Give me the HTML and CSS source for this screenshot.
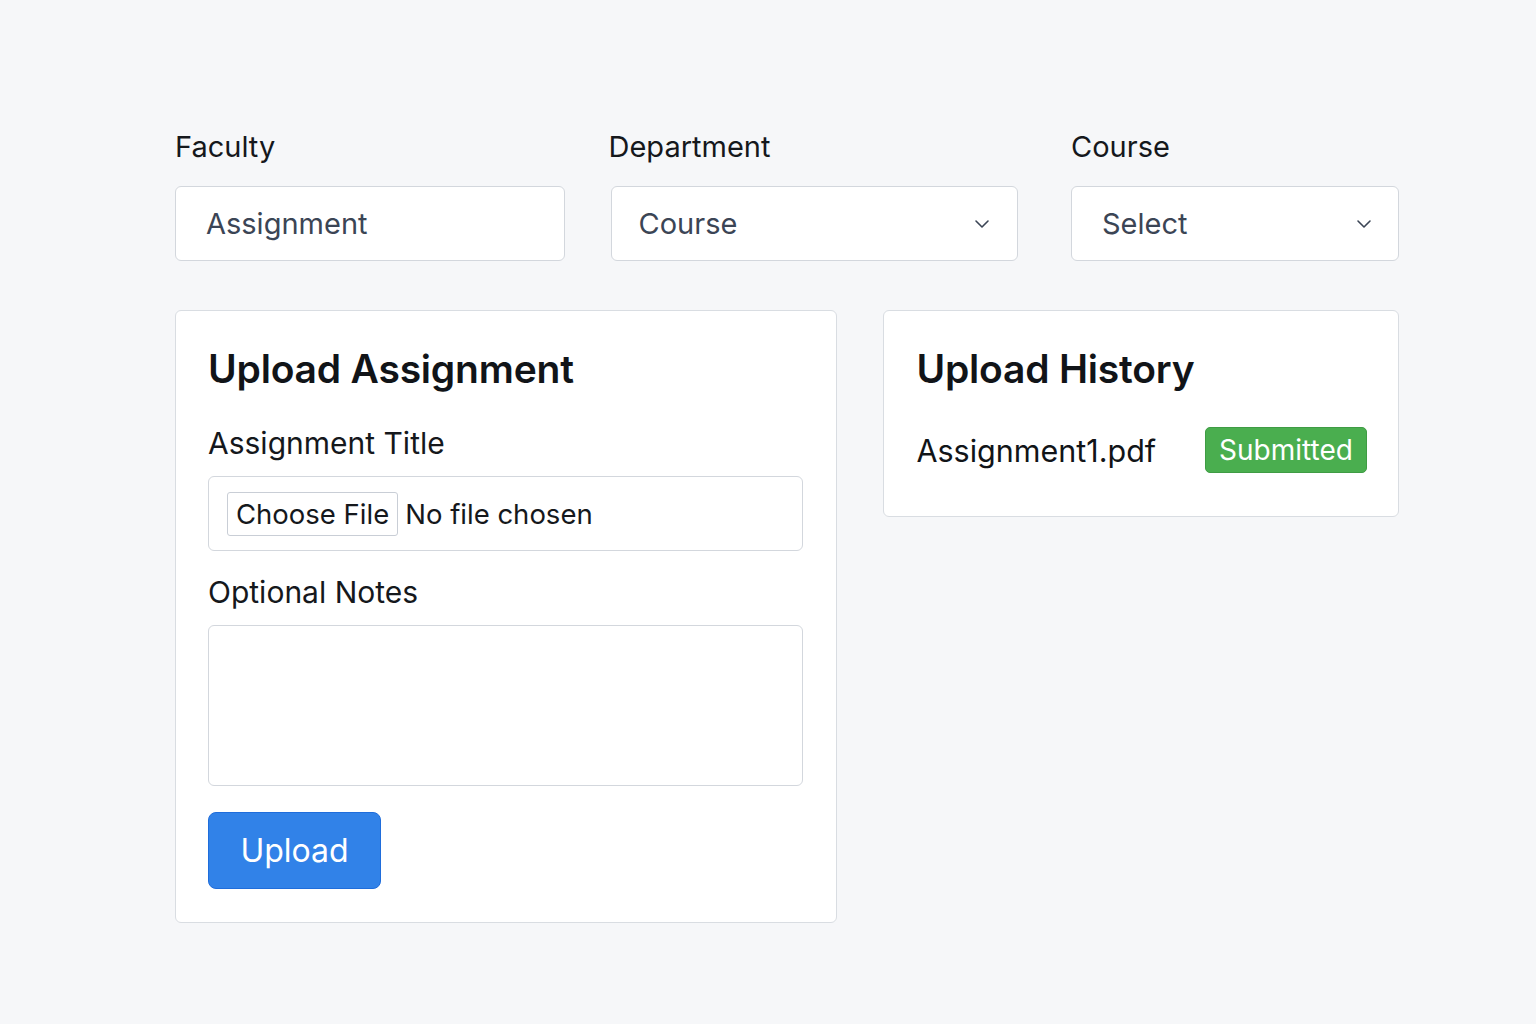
FILE: index.html
```html
<!DOCTYPE html>
<html lang="en">
<head>
<meta charset="utf-8">
<title>Upload Assignment</title>
<link rel="stylesheet" href="styles.css">
</head>
<body>
<main class="page">
  <section class="filters">
    <div class="field field-faculty">
      <label class="field-label">Faculty</label>
      <div class="control">Assignment</div>
    </div>
    <div class="field field-dept">
      <label class="field-label">Department</label>
      <div class="control select">
        <span>Course</span>
        <svg class="chev" width="16" height="10" viewBox="0 0 16 10"><path d="M2 2l6 6 6-6" fill="none" stroke="#3b4555" stroke-width="1.6" stroke-linecap="round" stroke-linejoin="round"/></svg>
      </div>
    </div>
    <div class="field field-course">
      <label class="field-label">Course</label>
      <div class="control select">
        <span>Select</span>
        <svg class="chev" width="16" height="10" viewBox="0 0 16 10"><path d="M2 2l6 6 6-6" fill="none" stroke="#3b4555" stroke-width="1.6" stroke-linecap="round" stroke-linejoin="round"/></svg>
      </div>
    </div>
  </section>

  <section class="cards">
    <div class="card card-upload">
      <h2 class="card-title">Upload Assignment</h2>
      <div class="form-label">Assignment Title</div>
      <div class="file-box">
        <span class="file-btn">Choose File</span>
        <span class="file-text">No file chosen</span>
      </div>
      <div class="form-label notes-label">Optional Notes</div>
      <div class="textarea"></div>
      <button class="btn-upload">Upload</button>
    </div>
    <div class="card card-history">
      <h2 class="card-title">Upload History</h2>
      <div class="history-row">
        <span class="file-name">Assignment1.pdf</span>
        <span class="badge">Submitted</span>
      </div>
    </div>
  </section>
</main>
</body>
</html>
```
FILE: styles.css
```css
* { box-sizing: border-box; }
html, body { margin: 0; padding: 0; }
body {
  background: #f6f7f9;
  font-family: Inter, "Noto Sans", "Liberation Sans", sans-serif;
  color: #111418;
  width: 1536px;
  height: 1024px;
}
.page {
  padding: 130px 0 0 175px;
  width: 1399px;
}
.filters {
  display: flex;
  justify-content: space-between;
}
.field { display: flex; flex-direction: column; }
.field-faculty { width: 390px; }
.field-dept { width: 407px; margin-left: -8px; }
.field-course { width: 328px; }
.field-label {
  font-size: 29px;
  line-height: 34px;
  margin-bottom: 22px;
  color: #15181c;
}
.field-dept .field-label { margin-left: -2px; }
.control {
  height: 75px;
  background: #fff;
  border: 1px solid #d3d7dd;
  border-radius: 6px;
  padding: 0 30px;
  display: flex;
  align-items: center;
  font-size: 29px;
  color: #3b4555;
}
.select { justify-content: space-between; padding-right: 26px; }
.field-dept .control { padding-left: 27px; padding-right: 27px; }
.chev { display: block; }

.cards {
  display: flex;
  gap: 46px;
  margin-top: 49px;
  align-items: flex-start;
}
.card {
  background: #fff;
  border: 1px solid #d9dde2;
  border-radius: 6px;
}
.card-upload { width: 663px; padding: 34px 33px 33px 32px; }
.card-history { width: 516px; padding: 34px 31px 43px 32px; }
.card-title {
  margin: 0;
  font-size: 39px;
  line-height: 48px;
  font-weight: 600;
  color: #111418;
  letter-spacing: -0.2px;
}
.form-label {
  font-size: 30px;
  line-height: 36px;
  margin-top: 32px;
  margin-bottom: 15px;
  color: #15181c;
}
.notes-label { margin-top: 23px; }
.file-box {
  height: 75px;
  border: 1px solid #d3d7dd;
  border-radius: 6px;
  display: flex;
  align-items: center;
  padding-left: 18px;
  font-size: 27.5px;
}
.file-btn {
  border: 1px solid #c9ced6;
  border-radius: 3px;
  height: 44px;
  padding: 0 8px;
  display: flex;
  align-items: center;
  background: #fff;
  color: #15181c;
}
.file-text { margin-left: 7px; color: #15181c; }
.textarea {
  height: 161px;
  border: 1px solid #d3d7dd;
  border-radius: 6px;
}
.btn-upload {
  margin-top: 26px;
  display: block;
  width: 173px;
  height: 77px;
  background: #3182e8;
  border: 1px solid #1f6ddb;
  border-radius: 8px;
  color: #fff;
  font-family: inherit;
  font-size: 32px;
  padding: 0;
}
.history-row {
  margin-top: 34px;
  display: flex;
  justify-content: space-between;
  align-items: center;
}
.file-name { font-size: 30.5px; color: #111418; }
.badge {
  background: #4aae4f;
  border: 1px solid #3f9c44;
  border-radius: 5px;
  color: #fff;
  font-size: 28px;
  height: 46px;
  width: 162px;
  display: flex;
  align-items: center;
  justify-content: center;
}
```
